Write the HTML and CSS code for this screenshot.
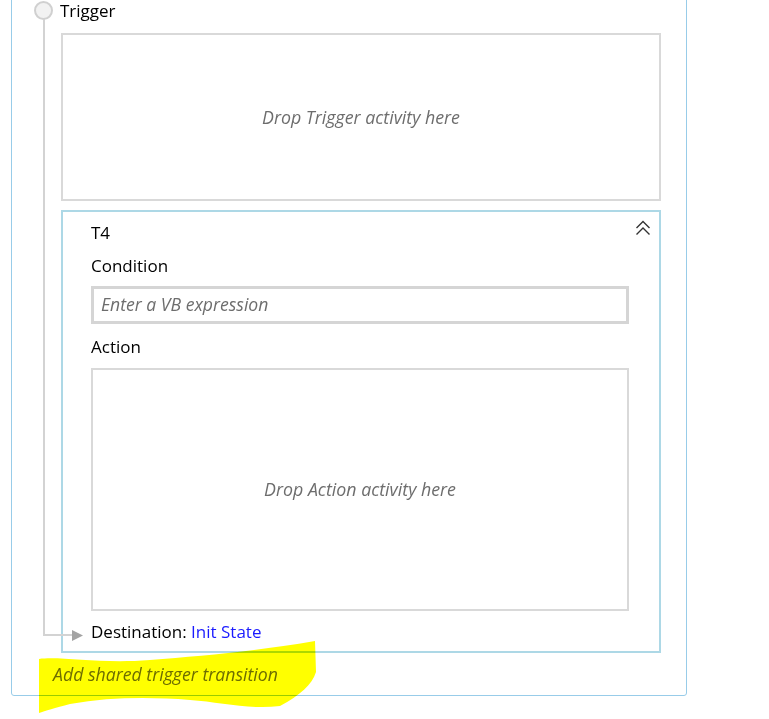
FILE: index.html
```html
<!DOCTYPE html>
<html>
<head>
    <title>State - Trigger</title>
    <link rel="stylesheet" href="styles.css">
</head>
<body>
    <div class="state">
        <svg class="connector" width="100" height="650" viewBox="0 0 100 650">
            <path d="M44 19 V635 H73" fill="none" stroke="#d3d3d3" stroke-width="2"/>
            <polygon points="72,630 83,635.5 72,641" fill="#a3a3a3"/>
        </svg>
        <div class="trigger-head">
            <span class="dot"></span>
            <span>Trigger</span>
        </div>
        <div class="drop trigger-drop">Drop Trigger activity here</div>
        <div class="transition">
            <div class="transition-head">
                <span>T4</span>
                <svg class="collapse" width="16" height="16" viewBox="0 0 16 16">
                    <path d="M1.5 8 L8 1.5 L14.5 8 M1.5 14.5 L8 8 L14.5 14.5" fill="none" stroke="#333" stroke-width="1.4"/>
                </svg>
            </div>
            <div class="label">Condition</div>
            <div class="expr">Enter a VB expression</div>
            <div class="label action-label">Action</div>
            <div class="drop action-drop">Drop Action activity here</div>
            <div class="dest">Destination: <span class="link">Init State</span></div>
        </div>
        <div class="add-shared">Add shared trigger transition</div>
    </div>
    <svg class="marker" width="769" height="719" viewBox="0 0 769 719">
        <path d="M39 659 C60 656 100 664 150 660 C200 656 250 652 315 641 L316 672 C312 685 300 695 280 706 C250 710 220 702 190 700 C150 697 110 697 70 704 C55 708 45 711 39 713 Z" fill="#ffff00"/>
    </svg>
</body>
</html>
```

FILE: styles.css
```css
* {
    box-sizing: border-box;
}
html {
    background: white;
}
body {
    margin: 0;
    font-family: "Open Sans", Lato, sans-serif;
    font-size: 17px;
    line-height: 21px;
    color: black;
}
.state {
    position: relative;
    width: 676px;
    margin: -12px 0 0 11px;
    padding: 11px 25px 10px 0;
    border: 1px solid #98cce9;
    border-radius: 3px;
}
.connector {
    position: absolute;
    left: -12px;
    top: 11px;
}
.trigger-head {
    display: flex;
    align-items: center;
    gap: 7px;
    height: 20px;
    padding-left: 22px;
}
.dot {
    width: 19px;
    height: 19px;
    border: 2px solid #d0d0d0;
    border-radius: 50%;
    background: #f2f2f2;
}
.drop {
    display: flex;
    align-items: center;
    justify-content: center;
    border: 2px solid #d9d9d9;
    color: #6d6d6d;
    font-style: italic;
    font-size: 17.8px;
}
.trigger-drop {
    height: 168px;
    margin: 13px 0 0 49px;
}
.transition {
    height: 443px;
    margin: 9px 0 0 49px;
    padding: 10px 30px 9px 28px;
    border: 2px solid #add8e6;
}
.transition-head {
    display: flex;
    justify-content: space-between;
    margin-right: -22px;
}
.collapse {
    margin-top: -2px;
}
.label {
    margin-top: 12px;
}
.expr {
    height: 38px;
    margin-top: 10px;
    padding: 5px 7px;
    border: 3px solid #d5d5d5;
    color: #6d6d6d;
    font-style: italic;
    font-size: 17.6px;
}
.action-drop {
    height: 243px;
    margin-top: 11px;
}
.dest {
    margin-top: 10px;
}
.link {
    color: #1a1aff;
}
.add-shared {
    margin: 11px 0 0 41px;
    color: #6d6d6d;
    font-style: italic;
    font-size: 17.7px;
}
.marker {
    position: absolute;
    left: 0;
    top: 0;
    mix-blend-mode: multiply;
    pointer-events: none;
}
```
